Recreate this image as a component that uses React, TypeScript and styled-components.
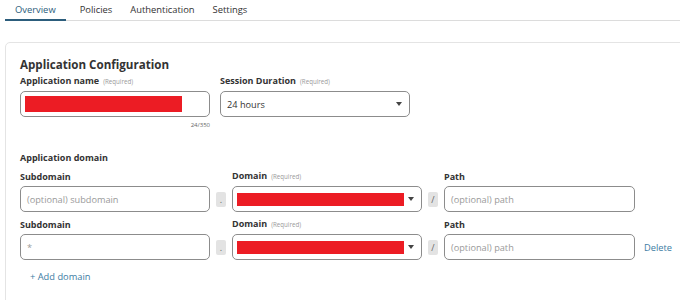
import styled, { createGlobalStyle } from "styled-components";

const GlobalStyle = createGlobalStyle`
  html, body {
    margin: 0;
    padding: 0;
    background: #fff;
    overflow: hidden;
  }
  body {
    font-family: "Open Sans", "Noto Sans", sans-serif;
    color: #333;
  }
`;

const Page = styled.div`
  width: 680px;
  height: 300px;
  padding-left: 5px;
  box-sizing: border-box;
  overflow: hidden;
`;

const TabBar = styled.div`
  display: flex;
  height: 21px;
  border-bottom: 1px solid #dcdcdc;
  box-sizing: border-box;
  width: 760px;
`;

const Tab = styled.div<{ $active?: boolean }>`
  padding: 0 ${(p) => (p.$active ? "10px" : "9px")};
  font-size: 9.4px;
  line-height: 19px;
  color: ${(p) => (p.$active ? "#2c5d7c" : "#333")};
  border-bottom: 2px solid ${(p) => (p.$active ? "#2c5d7c" : "transparent")};
  margin-bottom: -1px;
  margin-right: ${(p) => (p.$active ? "5px" : "0")};
`;

const Card = styled.div`
  margin-top: 21px;
  width: 760px;
  height: 300px;
  border: 1px solid #e4e4e4;
  border-radius: 5px;
  padding: 13px 14px 0;
  box-sizing: border-box;
`;

const Title = styled.h2`
  margin: 0;
  font-size: 11.6px;
  line-height: 18px;
  font-weight: 700;
  color: #333;
`;

const TopRow = styled.div`
  display: flex;
  gap: 10px;
`;

const Field = styled.div<{ $width: number }>`
  width: ${(p) => p.$width}px;
  display: flex;
  flex-direction: column;
`;

const Label = styled.div`
  font-size: 9px;
  line-height: 14px;
  font-weight: 700;
  color: #333;
  margin-bottom: 2px;
  white-space: nowrap;
`;

const Required = styled.span`
  font-size: 6.2px;
  font-weight: 400;
  color: #999;
  margin-left: 4px;
`;

const Box = styled.div`
  height: 26px;
  border: 1px solid #8c8c8c;
  border-radius: 5px;
  box-sizing: border-box;
  display: flex;
  align-items: center;
  padding: 0 6px 0 4px;
  font-size: 9.2px;
  background: #fff;
`;

const BoxText = styled.span<{ $muted?: boolean }>`
  flex: 1;
  padding-left: 2px;
  color: ${(p) => (p.$muted ? "#9a9a9a" : "#333")};
`;

const Redacted = styled.div<{ $width: number; $height: number }>`
  width: ${(p) => p.$width}px;
  height: ${(p) => p.$height}px;
  background: #ec1c24;
`;

const Spacer = styled.div`
  flex: 1;
`;

const Caret = styled.span`
  width: 0;
  height: 0;
  border-left: 3.5px solid transparent;
  border-right: 3.5px solid transparent;
  border-top: 4px solid #444;
  margin-right: 1px;
`;

const Counter = styled.div`
  text-align: right;
  font-size: 6px;
  line-height: 8px;
  color: #666;
  margin-top: 4px;
`;

const SectionTitle = styled.div`
  margin-top: 22px;
  font-size: 9px;
  line-height: 14px;
  font-weight: 700;
  color: #333;
`;

const DomainRow = styled.div`
  display: grid;
  grid-template-columns: 190px 10px 190px 10px 191px auto;
  column-gap: 6px;
  align-items: center;
  margin-top: 4px;
  & + & {
    margin-top: 5px;
  }
`;

const Sep = styled.div`
  height: 15px;
  background: #e3e3e3;
  border-radius: 2px;
  display: flex;
  align-items: center;
  justify-content: center;
  font-size: 9px;
  color: #666;
`;

const LinkText = styled.span`
  font-size: 9.3px;
  color: #3d7ca3;
  cursor: pointer;
`;

const DeleteLink = styled(LinkText)`
  padding-left: 3px;
`;

const AddDomain = styled(LinkText)`
  display: block;
  margin-top: 10px;
  margin-left: 10px;
  line-height: 14px;
`;

function Select({ redacted, value }: { redacted?: boolean; value?: string }) {
  return (
    <Box>
      {redacted ? (
        <>
          <Redacted $width={167} $height={13} />
          <Spacer />
        </>
      ) : (
        <BoxText>{value}</BoxText>
      )}
      <Caret />
    </Box>
  );
}

function DomainEntry({ subdomain, removable }: { subdomain?: string; removable?: boolean }) {
  return (
    <DomainRow>
      <Label>Subdomain</Label>
      <span />
      <Label>
        Domain<Required>(Required)</Required>
      </Label>
      <span />
      <Label>Path</Label>
      <span />
      <Box>
        <BoxText $muted>{subdomain ?? "(optional) subdomain"}</BoxText>
      </Box>
      <Sep>.</Sep>
      <Select redacted />
      <Sep>/</Sep>
      <Box>
        <BoxText $muted>(optional) path</BoxText>
      </Box>
      {removable ? <DeleteLink>Delete</DeleteLink> : <span />}
    </DomainRow>
  );
}

export default function App() {
  return (
    <>
      <GlobalStyle />
      <Page>
        <TabBar>
          <Tab $active>Overview</Tab>
          <Tab>Policies</Tab>
          <Tab>Authentication</Tab>
          <Tab>Settings</Tab>
        </TabBar>
        <Card>
          <Title>Application Configuration</Title>
          <TopRow>
            <Field $width={190}>
              <Label>
                Application name<Required>(Required)</Required>
              </Label>
              <Box>
                <Redacted $width={157} $height={16} />
              </Box>
              <Counter>24/350</Counter>
            </Field>
            <Field $width={190}>
              <Label>
                Session Duration<Required>(Required)</Required>
              </Label>
              <Select value="24 hours" />
            </Field>
          </TopRow>
          <SectionTitle>Application domain</SectionTitle>
          <DomainEntry />
          <DomainEntry subdomain="*" removable />
          <AddDomain>+ Add domain</AddDomain>
        </Card>
      </Page>
    </>
  );
}
